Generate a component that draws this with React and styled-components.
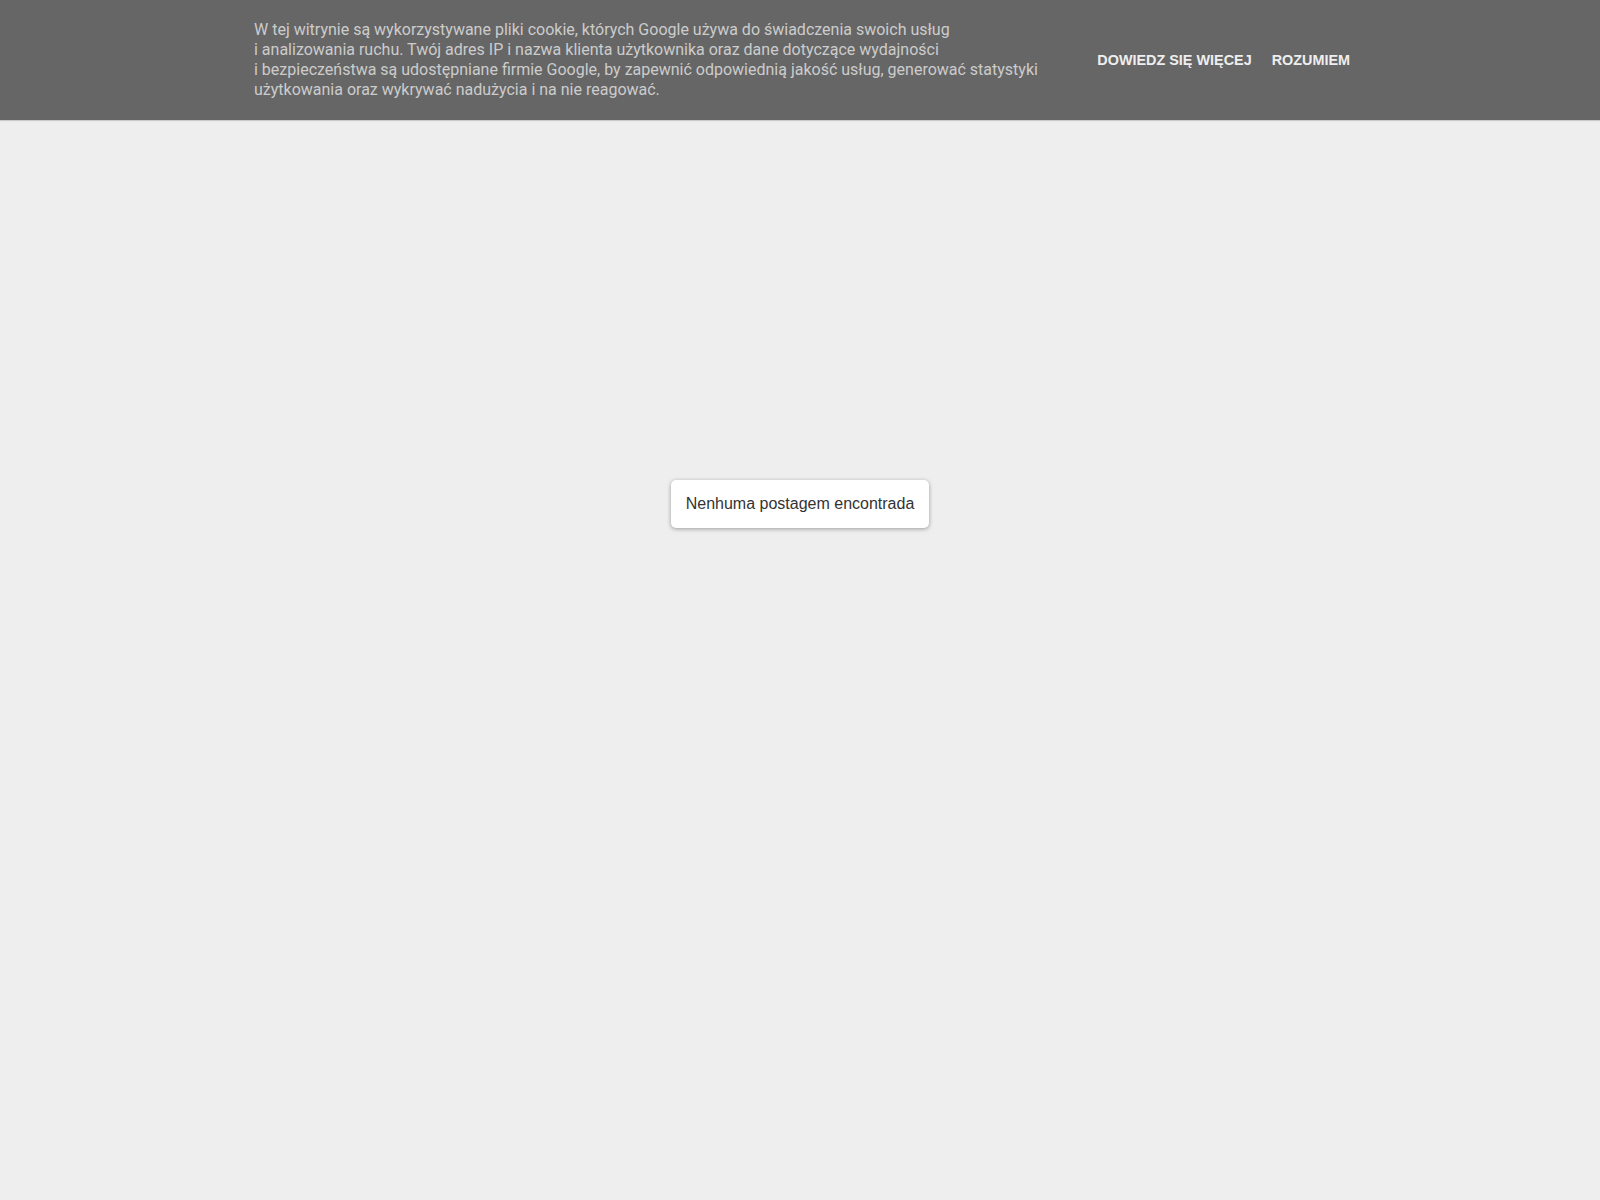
import styled, { createGlobalStyle } from 'styled-components'

const GlobalStyle = createGlobalStyle`
	html, body {
		margin: 0;
		padding: 0;
		background: #eee;
	}
	body {
		min-height: 1200px;
	}
`

const CookieBar = styled.div`
	background-color: #666;
	height: 120px;
	display: flex;
	align-items: center;
	font-family: Roboto, 'Liberation Sans', sans-serif;
	box-shadow: 0 1px 1px rgba(0, 0, 0, 0.15);
`

const CookieInner = styled.div`
	width: 1100px;
	margin: 0 auto;
	padding-left: 4px;
	box-sizing: border-box;
	display: flex;
	align-items: center;
	justify-content: space-between;
`

const CookieText = styled.p`
	margin: 0;
	font-size: 16px;
	line-height: 20px;
	color: #ccc;
`

const Actions = styled.div`
	display: flex;
	align-items: center;
	gap: 20px;
`

const CookieButton = styled.a`
	font-family: 'Liberation Sans', Arial, sans-serif;
	font-weight: bold;
	font-size: 14.4px;
	text-transform: uppercase;
	color: #eee;
	text-decoration: none;
	cursor: pointer;
	white-space: nowrap;
`

const Main = styled.main`
	display: flex;
	justify-content: center;
	padding-top: 360px;
`

const Notice = styled.div`
	background: #fff;
	border-radius: 5px;
	box-shadow: 0 1px 4px rgba(0, 0, 0, 0.35);
	padding: 15px 15px;
	font-family: 'Liberation Sans', Arial, sans-serif;
	font-size: 16px;
	line-height: 18px;
	color: #333;
`

export default function App() {
	return (
		<>
			<GlobalStyle />
			<CookieBar>
				<CookieInner>
					<CookieText>
						W tej witrynie są wykorzystywane pliki cookie, których Google używa do świadczenia swoich usług
						<br />i analizowania ruchu. Twój adres IP i nazwa klienta użytkownika oraz dane dotyczące wydajności
						<br />i bezpieczeństwa są udostępniane firmie Google, by zapewnić odpowiednią jakość usług, generować statystyki
						<br />użytkowania oraz wykrywać nadużycia i na nie reagować.
					</CookieText>
					<Actions>
						<CookieButton>Dowiedz się więcej</CookieButton>
						<CookieButton>Rozumiem</CookieButton>
					</Actions>
				</CookieInner>
			</CookieBar>
			<Main>
				<Notice>Nenhuma postagem encontrada</Notice>
			</Main>
		</>
	)
}
